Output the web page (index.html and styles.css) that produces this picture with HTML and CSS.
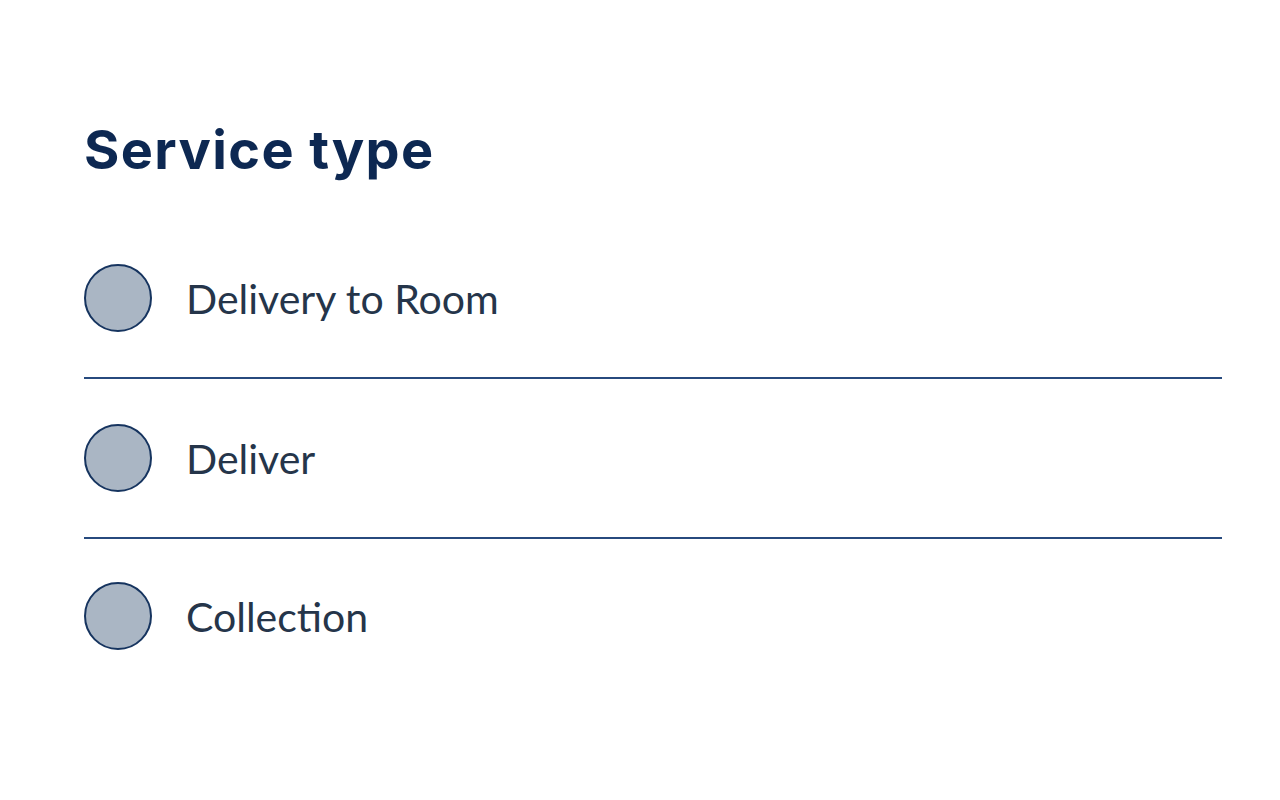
FILE: index.html
```html
<!DOCTYPE html>
<html lang="en">
<head>
<meta charset="utf-8">
<title>Service type</title>
<link rel="stylesheet" href="styles.css">
</head>
<body>
<main class="page">
  <h1 class="title">Service type</h1>
  <ul class="options">
    <li class="option"><span class="radio"></span><span class="label">Delivery to Room</span></li>
    <li class="option"><span class="radio"></span><span class="label">Deliver</span></li>
    <li class="option"><span class="radio"></span><span class="label">Collection</span></li>
  </ul>
</main>
</body>
</html>
```

FILE: styles.css
```css
html, body {
  margin: 0;
  padding: 0;
  background: #ffffff;
}
.page {
  padding: 112px 58px 0 84px;
}
.title {
  margin: 0;
  font-family: "Inter", "Lato", sans-serif;
  font-weight: 700;
  font-size: 54px;
  line-height: 76px;
  letter-spacing: 1.4px;
  color: #0d2852;
}
.options {
  list-style: none;
  margin: 31px 0 0 0;
  padding: 0;
}
.option {
  display: flex;
  align-items: center;
  gap: 34px;
  height: 158px;
  border-bottom: 2px solid #274a7e;
}
.option:last-child {
  border-bottom: none;
  height: 154px;
}
.radio {
  box-sizing: border-box;
  width: 68px;
  height: 68px;
  border-radius: 50%;
  border: 2px solid #16345f;
  background: #aab6c4;
  flex: none;
}
.label {
  font-family: "Lato", sans-serif;
  font-size: 41px;
  color: #25354a;
}
```
